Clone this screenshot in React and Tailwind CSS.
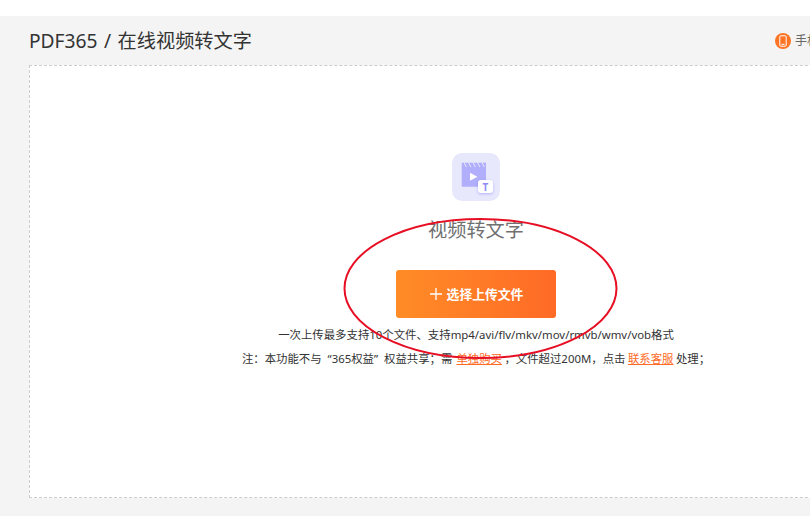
/**
 * PDF365 video-to-text upload page.
 */

const FONT = "font-['Noto_Sans','Noto_Sans_CJK_SC',sans-serif]";

export default function App() {
  return (
    <div className={`relative w-[810px] h-[516px] overflow-hidden bg-white pt-4 ${FONT}`}>
      <div className="h-[500px] bg-[#f4f4f4] pl-[29px] flex flex-col">
        {/* Header */}
        <div className="h-[49px] shrink-0 w-[781px] flex items-center justify-between">
          <h1 className="pt-px text-[19.2px] [word-spacing:1.5px] leading-[50px] text-[#333] font-normal whitespace-nowrap">
            PDF365 / 在线视频转文字
          </h1>
          <div className="flex items-center gap-1 w-[35px] shrink-0 overflow-hidden">
            <PhoneIcon />
            <span className="text-[12px] text-[#666] whitespace-nowrap">手机</span>
          </div>
        </div>

        {/* Upload area */}
        <div className="w-[894px] h-[433px] shrink-0 bg-white border border-dashed border-[#ccc] flex flex-col items-center pt-[87px]">
          <ToolIcon />
          <p className="mt-[15px] text-[19.2px] leading-[28px] text-[#707070]">视频转文字</p>
          <button className="mt-[26px] w-[160px] h-[48px] rounded-[3px] bg-gradient-to-r from-[#ff8c26] to-[#ff6a26] flex items-center justify-center gap-[4px] text-white text-[12.8px] font-bold">
            <PlusIcon />
            <span className="pt-px">选择上传文件</span>
          </button>
          <p className="mt-[5px] text-[11.4px] leading-[24px] text-[#333] whitespace-nowrap">
            一次上传最多支持10个文件、支持mp4/avi/flv/mkv/mov/rmvb/wmv/vob格式
          </p>
          <p className="text-[11.4px] [word-spacing:1px] leading-[23px] text-[#333] whitespace-nowrap">
            注：本功能不与 <span className="px-[2px]">“365权益”</span> 权益共享；需 <a className="text-[#ff6a26] underline">单独购买</a>
            <span className="[word-spacing:-0.5px]"> ，文件超过200M，点击 <a className="text-[#ff6a26] underline">联系客服</a> 处理；</span>
          </p>
        </div>
      </div>

      {/* Red hand-drawn annotation over the page */}
      <svg className="absolute left-0 top-0 pointer-events-none" width="810" height="516" fill="none">
        <ellipse cx="480.5" cy="288.5" rx="136" ry="69.5" stroke="#e60f23" strokeWidth="2" />
      </svg>
    </div>
  );
}

function PhoneIcon() {
  return (
    <svg width="16" height="16" viewBox="0 0 16 16" fill="none" className="shrink-0">
      <circle cx="8" cy="8" r="8" fill="#ff7425" />
      <rect x="4.8" y="2.8" width="6.4" height="10.4" rx="1" stroke="#fff" strokeWidth="1" />
      <path d="M6.5 11.3h3" stroke="#fff" strokeWidth="1" />
    </svg>
  );
}

function PlusIcon() {
  return (
    <svg width="14" height="14" viewBox="0 0 14 14" fill="none" className="shrink-0">
      <path d="M7 1v12M1 7h12" stroke="#fff" strokeWidth="1.3" />
    </svg>
  );
}

function ToolIcon() {
  return (
    <div className="relative w-[48px] h-[48px] rounded-[10px] bg-[#e8e8fd] shrink-0">
      <svg width="48" height="48" viewBox="0 0 48 48" fill="none" className="absolute left-0 top-0">
        <rect x="9.7" y="9.7" width="24.3" height="4.3" fill="#b1aefb" />
        <path d="M12 9.5l2.5 4.7M16.5 9.5l2.5 4.7M21 9.5l2.5 4.7M25.5 9.5l2.5 4.7M30 9.5l2.5 4.7" stroke="#e8e8fd" strokeWidth="1" />
        <path d="M9.7 14h24.3v18.7a1 1 0 0 1-1 1H10.7a1 1 0 0 1-1-1z" fill="#b1aefb" />
        <path d="M18 19.7l7.4 4-7.4 4z" fill="#fff" />
      </svg>
      <div className="absolute left-[26px] top-[27px] w-[15px] h-[13px] rounded-[3px] bg-white shadow-[0_1px_3px_rgba(120,115,240,0.45)] flex items-center justify-center text-[10px] leading-none font-bold text-[#8f8bf5]">
        T
      </div>
    </div>
  );
}
